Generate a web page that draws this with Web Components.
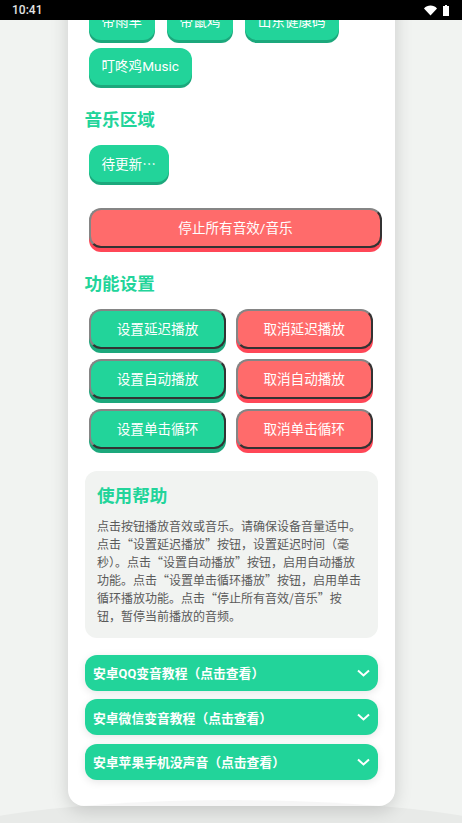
<!DOCTYPE html>
<html lang="zh-CN">
<head>
<meta charset="utf-8">
<title>音效板</title>
<style>
  html, body { margin: 0; padding: 0; background: #f1f3f1; }
  body { font-family: Roboto, "Noto Sans CJK SC", sans-serif; }
  .cjk { font-family: "Noto Sans CJK SC", sans-serif; }
</style>
</head>
<body>
<app-page>
  <status-bar slot="status" time="10:41"></status-bar>
  <main-card>
    <button-row>
      <sound-button>帝雨芈</sound-button>
      <sound-button>帝鼠鸡</sound-button>
      <sound-button>山东健康码</sound-button>
      <sound-button>叮咚鸡Music</sound-button>
    </button-row>
    <section-title style="margin-top:22px">音乐区域</section-title>
    <button-row style="margin-top:13.6px">
      <sound-button>待更新<span class="cjk">…</span></sound-button>
    </button-row>
    <sound-button type="stop" style="margin-top:25.6px">停止所有音效/音乐</sound-button>
    <section-title style="margin-top:23px">功能设置</section-title>
    <setting-grid style="margin-top:14px">
      <sound-button type="set">设置延迟播放</sound-button>
      <sound-button type="cancel">取消延迟播放</sound-button>
      <sound-button type="set">设置自动播放</sound-button>
      <sound-button type="cancel">取消自动播放</sound-button>
      <sound-button type="set">设置单击循环</sound-button>
      <sound-button type="cancel">取消单击循环</sound-button>
    </setting-grid>
    <help-box style="margin-top:22px" heading="使用帮助">点击按钮播放音效或音乐。请确保设备音量适中。点击“设置延迟播放”按钮，设置延迟时间（毫秒）。点击“设置自动播放”按钮，启用自动播放功能。点击“设置单击循环播放”按钮，启用单击循环播放功能。点击“停止所有音效/音乐”按钮，暂停当前播放的音频。</help-box>
    <guide-item style="margin-top:17px">安卓QQ变音教程（点击查看）</guide-item>
    <guide-item style="margin-top:8.5px">安卓微信变音教程（点击查看）</guide-item>
    <guide-item style="margin-top:8.5px">安卓苹果手机没声音（点击查看）</guide-item>
  </main-card>
</app-page>

<script>
class appPage extends HTMLElement {
  constructor() {
    super();
    this.shadowDOM = this.attachShadow({ mode: "open" });
  }
  connectedCallback() {
    this.shadowDOM.innerHTML = `
    <style>
    :host {
      display: flex;
      flex-direction: column;
      position: relative;
      height: 823px;
      overflow: hidden;
      background: #f1f3f1;
    }
    .content {
      flex: 1;
      min-height: 0;
      overflow: hidden;
      padding-left: 68px;
    }
    .arc {
      position: absolute;
      left: -20%;
      top: 800px;
      width: 140%;
      height: 104px;
      border-radius: 50%;
      background: rgba(0, 0, 0, 0.035);
      pointer-events: none;
    }
    </style>
    <slot name="status"></slot>
    <div class="content"><slot></slot></div>
    <div class="arc"></div>
    `;
  }
}

class statusBar extends HTMLElement {
  constructor() {
    super();
    this.shadowDOM = this.attachShadow({ mode: "open" });
  }
  connectedCallback() {
    this.shadowDOM.innerHTML = `
    <style>
    :host {
      display: flex;
      flex: none;
      align-items: center;
      justify-content: space-between;
      height: 20px;
      padding: 0 13px 0 12px;
      background: #000;
      color: #e2e2e2;
      font: 500 12px Roboto, sans-serif;
    }
    .icons { display: flex; align-items: center; gap: 6px; }
    svg { display: block; fill: #fff; }
    </style>
    <span>${this.getAttribute("time")}</span>
    <div class="icons">
      <svg width="13" height="11" viewBox="0 0 13 11"><path d="M6.500 10.600 0 3.400C1.800 1.600 4 .6 6.500.6s4.700 1 6.500 2.800z"/></svg>
      <svg width="6" height="11" viewBox="0 0 6 11"><path d="M2 0h2v1h2v10H0V1h2z"/></svg>
    </div>
    `;
  }
}

class mainCard extends HTMLElement {
  constructor() {
    super();
    this.shadowDOM = this.attachShadow({ mode: "open" });
  }
  connectedCallback() {
    this.shadowDOM.innerHTML = `
    <style>
    :host {
      display: block;
      box-sizing: border-box;
      width: 327px;
      margin-top: -40px;
      padding: 23px 17px 26px;
      background: #fff;
      border-radius: 16px;
      box-shadow: 0 4px 18px rgba(0, 0, 0, 0.16);
    }
    </style>
    <slot></slot>
    `;
  }
}

class buttonRow extends HTMLElement {
  constructor() {
    super();
    this.shadowDOM = this.attachShadow({ mode: "open" });
  }
  connectedCallback() {
    this.shadowDOM.innerHTML = `
    <style>
    :host {
      display: flex;
      flex-wrap: wrap;
      gap: 7.6px 12px;
      padding-left: 4px;
    }
    </style>
    <slot></slot>
    `;
  }
}

class settingGrid extends HTMLElement {
  constructor() {
    super();
    this.shadowDOM = this.attachShadow({ mode: "open" });
  }
  connectedCallback() {
    this.shadowDOM.innerHTML = `
    <style>
    :host {
      display: grid;
      grid-template-columns: 137px 137px;
      gap: 10px 9.7px;
      padding-left: 4px;
    }
    </style>
    <slot></slot>
    `;
  }
}

class soundButton extends HTMLElement {
  constructor() {
    super();
    this.shadowDOM = this.attachShadow({ mode: "open" });
  }
  connectedCallback() {
    const type = this.getAttribute("type") || "sound";
    this.shadowDOM.innerHTML = `
    <style>
    :host { display: block; }
    :host([type="stop"]) { margin-left: 4px; width: 100%; }
    button {
      display: block;
      box-sizing: border-box;
      width: 100%;
      height: 37.4px;
      padding: 0 13px 0 12.4px;
      border: none;
      border-radius: 12px;
      background: #22d49a;
      color: #fff;
      font: 13.6px/19px Roboto, "Noto Sans CJK SC", sans-serif;
      box-shadow: 0 3px 0 #1ca87c;
      white-space: nowrap;
    }
    .set, .cancel, .stop {
      height: 40px;
      padding: 1px 12.8px 0;
      border: 2px solid;
      border-color: #858585 #333 #333 #858585;
      box-shadow: 0 4px 0 #1ca87c;
    }
    .cancel, .stop {
      background: #ff6b6b;
      box-shadow: 0 4px 0 #ff4757;
    }
    </style>
    <button class="${type}"><slot></slot></button>
    `;
  }
}

class sectionTitle extends HTMLElement {
  constructor() {
    super();
    this.shadowDOM = this.attachShadow({ mode: "open" });
  }
  connectedCallback() {
    this.shadowDOM.innerHTML = `
    <style>
    :host {
      display: block;
      margin-left: -0.5px;
      color: #22d49a;
      font: 700 17.6px/24px "Noto Sans CJK SC", sans-serif;
    }
    </style>
    <slot></slot>
    `;
  }
}

class helpBox extends HTMLElement {
  constructor() {
    super();
    this.shadowDOM = this.attachShadow({ mode: "open" });
  }
  connectedCallback() {
    this.shadowDOM.innerHTML = `
    <style>
    :host {
      display: block;
      box-sizing: border-box;
      height: 167px;
      padding: 12px 13.6px 0 12px;
      border-radius: 12px;
      background: #f1f3f1;
    }
    h2 {
      margin: 0 0 10px;
      color: #22d49a;
      font: 700 17.6px/24px "Noto Sans CJK SC", sans-serif;
    }
    p {
      margin: 0;
      color: #5a5a5a;
      font: 12px/18px "Noto Sans CJK SC", sans-serif;
    }
    </style>
    <h2>${this.getAttribute("heading")}</h2>
    <p><slot></slot></p>
    `;
  }
}

class guideItem extends HTMLElement {
  constructor() {
    super();
    this.shadowDOM = this.attachShadow({ mode: "open" });
  }
  connectedCallback() {
    this.shadowDOM.innerHTML = `
    <style>
    :host {
      display: flex;
      align-items: center;
      justify-content: space-between;
      box-sizing: border-box;
      height: 36px;
      padding: 0 8px;
      border-radius: 12px;
      background: #22d49a;
      color: #fff;
      font: 700 12.8px Roboto, "Noto Sans CJK SC", sans-serif;
      box-shadow: 0 2px 8px rgba(0, 0, 0, 0.1);
    }
    svg { display: block; fill: none; stroke: #fff; stroke-width: 2; }
    </style>
    <span><slot></slot></span>
    <svg width="13" height="8" viewBox="0 0 13 8"><path d="M1 1.500 6.500 6.500 12 1.500"/></svg>
    `;
  }
}

customElements.define("app-page", appPage);
customElements.define("status-bar", statusBar);
customElements.define("main-card", mainCard);
customElements.define("button-row", buttonRow);
customElements.define("setting-grid", settingGrid);
customElements.define("sound-button", soundButton);
customElements.define("section-title", sectionTitle);
customElements.define("help-box", helpBox);
customElements.define("guide-item", guideItem);
</script>
</body>
</html>
